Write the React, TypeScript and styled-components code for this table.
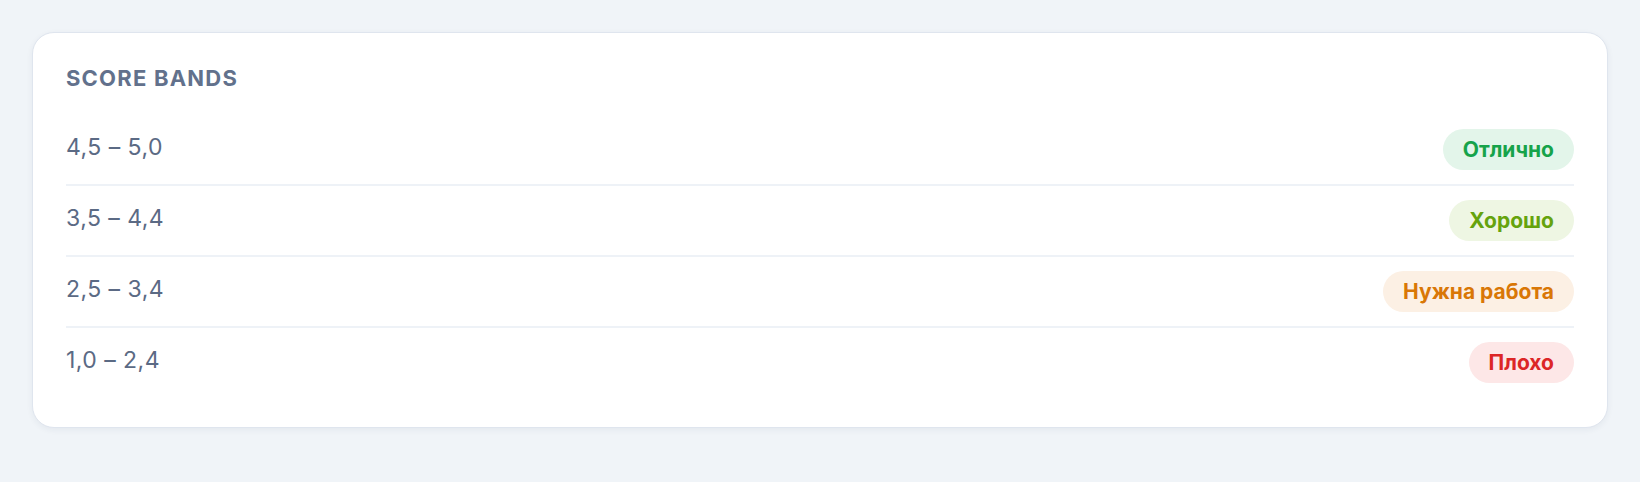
import React from "react";
import styled, { createGlobalStyle } from "styled-components";

const GlobalStyle = createGlobalStyle`
  html, body {
    margin: 0;
    padding: 0;
    background: #f0f4f8;
    font-family: Inter, "Noto Sans", sans-serif;
  }
`;

const Page = styled.div`
  padding: 32px;
  box-sizing: border-box;
  width: 1640px;
`;

const Card = styled.section`
  background: #ffffff;
  border: 1px solid #dfe5ee;
  border-radius: 22px;
  padding: 32px 33px 30px;
  box-shadow: 0 2px 6px rgba(30, 50, 90, 0.06);
`;

const Title = styled.h2`
  margin: 0 0 23px;
  font-size: 22px;
  line-height: 27px;
  font-weight: 700;
  letter-spacing: 0.055em;
  text-transform: uppercase;
  color: #62718c;
`;

const List = styled.ul`
  list-style: none;
  margin: 0;
  padding: 0;
`;

const Row = styled.li`
  display: flex;
  align-items: center;
  justify-content: space-between;
  padding: 14px 0;
  border-bottom: 2px solid #eef2f7;

  &:last-child {
    border-bottom: none;
  }
`;

const Range = styled.span`
  font-size: 23px;
  letter-spacing: 0.02em;
  padding-bottom: 5px;
  color: #5b6a84;
`;

type Tone = "great" | "good" | "work" | "bad";

const tones: Record<Tone, { fg: string; bg: string }> = {
  great: { fg: "#16a34a", bg: "#e3f5ea" },
  good: { fg: "#65a30d", bg: "#eef6e3" },
  work: { fg: "#d97706", bg: "#fcf0e4" },
  bad: { fg: "#dc2626", bg: "#fde7e7" },
};

const Pill = styled.span<{ $tone: Tone }>`
  display: inline-flex;
  align-items: center;
  height: 41px;
  padding: 0 20px;
  border-radius: 999px;
  font-size: 21px;
  font-weight: 700;
  color: ${(p) => tones[p.$tone].fg};
  background: ${(p) => tones[p.$tone].bg};
`;

const bands: { range: string; label: string; tone: Tone }[] = [
  { range: "4,5 – 5,0", label: "Отлично", tone: "great" },
  { range: "3,5 – 4,4", label: "Хорошо", tone: "good" },
  { range: "2,5 – 3,4", label: "Нужна работа", tone: "work" },
  { range: "1,0 – 2,4", label: "Плохо", tone: "bad" },
];

export default function App() {
  return (
    <>
      <GlobalStyle />
      <Page>
        <Card>
          <Title>Score bands</Title>
          <List>
            {bands.map((b) => (
              <Row key={b.range}>
                <Range>{b.range}</Range>
                <Pill $tone={b.tone}>{b.label}</Pill>
              </Row>
            ))}
          </List>
        </Card>
      </Page>
    </>
  );
}
